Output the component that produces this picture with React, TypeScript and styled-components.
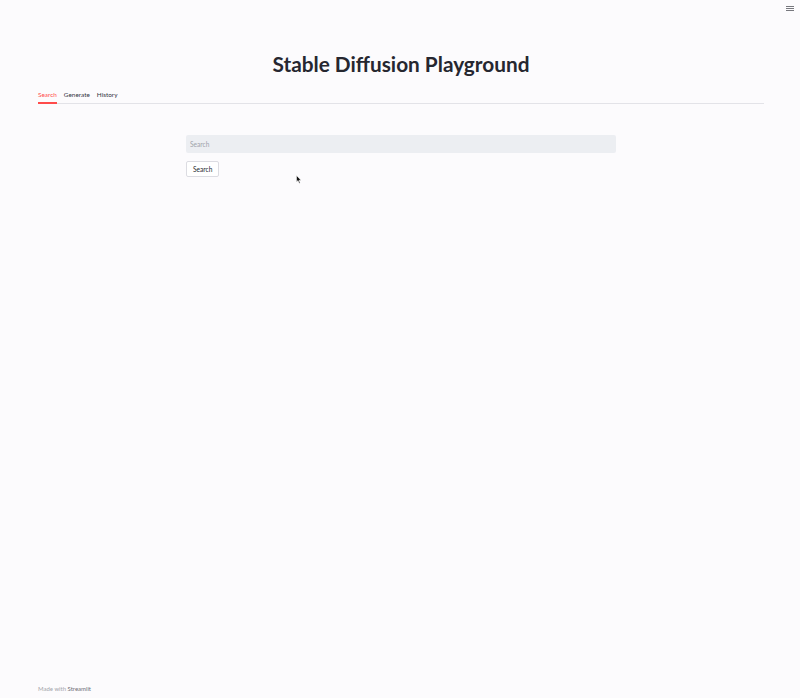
import React from "react";
import styled, { createGlobalStyle } from "styled-components";

const Global = createGlobalStyle`
  html, body { margin: 0; padding: 0; background: #fcfbfd; }
  body { font-family: Lato, "Noto Sans", sans-serif; color: #31333f; }
  * { box-sizing: border-box; }
`;

const Page = styled.div`
  position: relative;
  width: 800px;
  height: 698px;
  background: #fcfbfd;
  display: flex;
  flex-direction: column;
`;

const MenuButton = styled.div`
  position: absolute;
  top: 6px;
  right: 6px;
  width: 8px;
  display: flex;
  flex-direction: column;
  gap: 1.2px;
`;

const MenuLine = styled.span`
  display: block;
  height: 1px;
  background: #77787e;
`;

const Main = styled.main`
  flex: 1;
  padding: 49px 36px 0 38px;
  display: flex;
  flex-direction: column;
`;

const Title = styled.h1`
  margin: 0;
  text-align: center;
  font-size: 20.8px;
  font-weight: 700;
  line-height: 30px;
  color: #262730;
`;

const TabList = styled.div`
  margin-top: 10px;
  display: flex;
  gap: 7px;
  border-bottom: 1px solid #e3e3e8;
`;

const Tab = styled.div<{ $active?: boolean }>`
  font-size: 6.4px;
  line-height: 9px;
  padding: 1px 0 3px;
  color: ${(p) => (p.$active ? "#ff4b4b" : "#31333f")};
  border-bottom: 2px solid ${(p) => (p.$active ? "#ff4b4b" : "transparent")};
  margin-bottom: -1px;
`;

const Columns = styled.div`
  margin-top: 31px;
  display: grid;
  grid-template-columns: 1fr 3fr 1fr;
  column-gap: 4.7px;
`;

const Stack = styled.div`
  grid-column: 2;
  display: flex;
  flex-direction: column;
  align-items: flex-start;
  gap: 8px;
`;

const Input = styled.input`
  width: 100%;
  height: 18px;
  border: none;
  border-radius: 2px;
  background: #eceef2;
  padding: 0 4px;
  font-family: inherit;
  font-size: 6.6px;
  color: #31333f;
  outline: none;
  &::placeholder { color: #a0a2aa; }
`;

const Button = styled.button`
  height: 16px;
  padding: 0 6px;
  border: 1px solid #dcdce2;
  border-radius: 2px;
  background: #ffffff;
  font-family: inherit;
  font-size: 6.6px;
  color: #262730;
  cursor: pointer;
`;

const Footer = styled.footer`
  padding: 0 0 5px 38px;
  font-size: 6px;
  line-height: 8px;
  color: #a3a4aa;
`;

const FooterBrand = styled.span`
  color: #6d6e75;
`;

const Cursor = styled.svg`
  position: absolute;
  left: 296px;
  top: 175px;
`;

export default function App() {
  return (
    <Page>
      <Global />
      <MenuButton>
        <MenuLine />
        <MenuLine />
        <MenuLine />
      </MenuButton>
      <Main>
        <Title>Stable Diffusion Playground</Title>
        <TabList>
          <Tab $active>Search</Tab>
          <Tab>Generate</Tab>
          <Tab>History</Tab>
        </TabList>
        <Columns>
          <Stack>
            <Input placeholder="Search" />
            <Button>Search</Button>
          </Stack>
        </Columns>
      </Main>
      <Footer>
        Made with <FooterBrand>Streamlit</FooterBrand>
      </Footer>
      <Cursor width="6" height="9" viewBox="0 0 6 9">
        <path d="M0.5 0.5 L0.5 7 L2 5.6 L3.2 8.3 L4.2 7.9 L3 5.3 L5 5.2 Z" fill="#111" stroke="#fff" strokeWidth="0.5" />
      </Cursor>
    </Page>
  );
}
